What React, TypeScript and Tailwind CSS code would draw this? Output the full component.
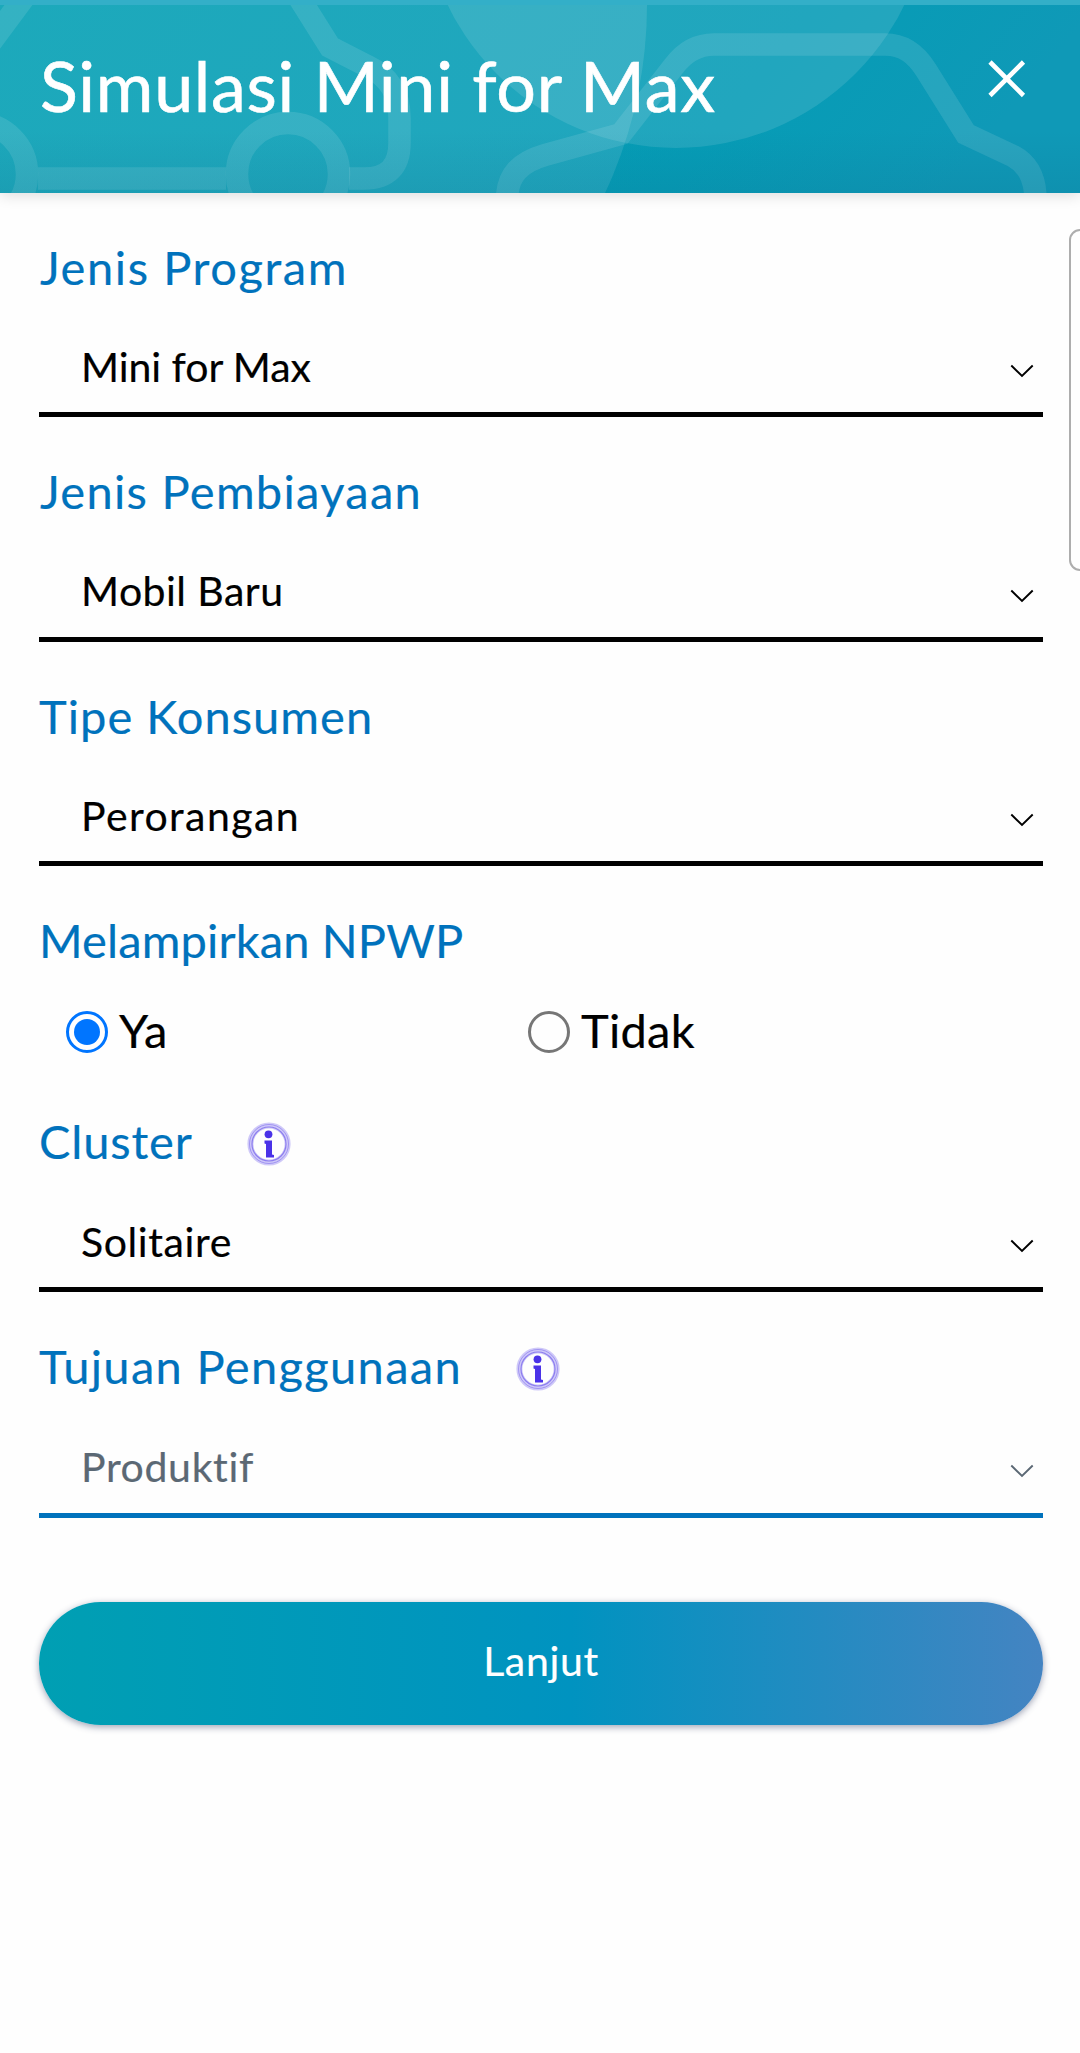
import React, { useState } from "react";

function HeaderArt() {
  return (
    <svg
      className="absolute inset-0 h-full w-full"
      viewBox="0 0 1080 193"
      preserveAspectRatio="none"
      aria-hidden="true"
    >
      <defs>
        <linearGradient id="sea" x1="0" y1="0" x2="1" y2="0.15">
          <stop offset="0" stopColor="#019fb3" />
          <stop offset="0.75" stopColor="#069cb6" />
          <stop offset="1" stopColor="#0f99b7" />
        </linearGradient>
        <linearGradient id="shade" x1="0" y1="0" x2="0" y2="1">
          <stop offset="0.68" stopColor="#0c5f80" stopOpacity="0" />
          <stop offset="1" stopColor="#0c5f80" stopOpacity="0.14" />
        </linearGradient>
      </defs>
      <rect width="1080" height="193" fill="url(#sea)" />
      <g fill="#ffffff" fillOpacity="0.11">
        <circle cx="205" cy="5" r="442" />
        <circle cx="676" cy="-106" r="254" />
      </g>
      <g fill="none" stroke="#ffffff" strokeOpacity="0.11" strokeWidth="22.5">
        <path d="M37 -20L-18 54" />
        <path d="M288 -20L330 47L367 66C390 77 399.5 94 399.5 118V143Q399.5 178.500 364 178.500H349" />
        <path d="M38 178.500H226" />
        <circle cx="288" cy="174" r="51" />
        <circle cx="-24" cy="174" r="51" />
        <path d="M507 200C507 174 521 162 545 155L621 134L674 66Q690 44.500 714 44.500H885C904 44.500 916 54 926 70L966 134L1013 156Q1035.500 168 1035.500 200" />
      </g>
      <rect width="1080" height="193" fill="url(#shade)" />
      <rect width="1080" height="5" fill="#33afc8" />
    </svg>
  );
}

function InfoIcon() {
  return (
    <svg className="h-11 w-11" viewBox="0 0 44 44" aria-hidden="true">
      <circle cx="22" cy="22" r="18.600" fill="none" stroke="#4a32e8" strokeOpacity="0.26" strokeWidth="6" />
      <circle cx="22" cy="22" r="17" fill="none" stroke="#4a32e8" strokeOpacity="0.5" strokeWidth="1.200" />
      <circle cx="22" cy="22" r="19.500" fill="none" stroke="#4a32e8" strokeOpacity="0.35" strokeWidth="1" />
      <circle cx="21.500" cy="12.300" r="3.900" fill="#4a32e8" />
      <path d="M17.500 18.500H25V32.500L27 33V35.500H19V22L17.500 21.500Z" fill="#4a32e8" />
    </svg>
  );
}

function Label({ text, spacing, info }: { text: string; spacing: string; info?: string }) {
  return (
    <div className="flex h-[60px] items-center text-[47px] leading-[60px] text-[#0072bc]">
      <span className={`pt-px whitespace-nowrap ${spacing}`}>{text}</span>
      {info && (
        <span className={`shrink-0 ${info}`}>
          <InfoIcon />
        </span>
      )}
    </div>
  );
}

type FieldProps = {
  label: string;
  labelSpacing: string;
  value: string;
  valueSpacing: string;
  box: string;
  tone?: string;
  info?: string;
};

function SelectField({ label, labelSpacing, value, valueSpacing, box, tone = "border-black text-black", info }: FieldProps) {
  return (
    <div>
      <Label text={label} spacing={labelSpacing} info={info} />
      <div className={`flex items-center justify-between border-b-5 pr-[9px] pl-[42px] ${box} ${tone}`}>
        <span className={`text-[41px] leading-[52px] whitespace-nowrap ${valueSpacing}`}>{value}</span>
        <svg className="mt-[34px] h-3.5 w-6" viewBox="0 0 24 14" fill="none" stroke="currentColor" strokeWidth="1.900">
          <path d="M1.300 1.500L12 12L22.700 1.500" />
        </svg>
      </div>
    </div>
  );
}

function Radio({ text, checked, onSelect, spacing }: { text: string; checked: boolean; onSelect: () => void; spacing: string }) {
  return (
    <button
      type="button"
      role="radio"
      aria-checked={checked}
      onClick={onSelect}
      className="flex h-[42px] w-[462px] items-center text-left text-black"
    >
      <span
        className={`flex size-[42px] shrink-0 items-center justify-center rounded-full border-[3px] ${
          checked ? "border-[#0075ff]" : "border-[#767676]"
        }`}
      >
        {checked && <span className="size-[26px] rounded-full bg-[#0075ff]" />}
      </span>
      <span className={`pb-[5px] pl-[11px] text-[47px] leading-[60px] ${spacing}`}>{text}</span>
    </button>
  );
}

export default function App() {
  const [npwp, setNpwp] = useState(true);
  return (
    <div className="relative h-[2053px] w-[1080px] overflow-hidden bg-[#fefefe] font-['Lato',sans-serif] [-webkit-text-stroke:0.2px_currentColor]">
      <header className="relative flex h-[193px] items-start justify-between pr-[53px] pl-10 text-white shadow-[0_2px_14px_rgba(0,0,0,0.14)]">
        <HeaderArt />
        <h1 className="relative mt-[45px] text-[70px] leading-[80px] tracking-[0.7px] whitespace-nowrap [-webkit-text-stroke:0.6px_currentColor]">
          Simulasi Mini for Max
        </h1>
        <button type="button" aria-label="Tutup" className="relative mt-[59px]">
          <svg className="size-10" viewBox="0 0 40 40" stroke="currentColor" strokeWidth="4.600">
            <path d="M3 3L36.500 36.500M36.500 3L3 36.500" />
          </svg>
        </button>
      </header>

      <main className="flex flex-col gap-[43px] pt-[43px] pr-[37px] pl-[39px]">
        <SelectField
          label="Jenis Program"
          labelSpacing="pl-px tracking-[1.59px]"
          value="Mini for Max"
          valueSpacing="tracking-[-0.05px] pt-[25px]"
          box="h-[121px]"
        />
        <SelectField
          label="Jenis Pembiayaan"
          labelSpacing="pl-px tracking-[1.3px]"
          value="Mobil Baru"
          valueSpacing="tracking-[0.45px] pt-[25px]"
          box="h-[122px]"
        />
        <SelectField
          label="Tipe Konsumen"
          labelSpacing="tracking-[1.05px]"
          value="Perorangan"
          valueSpacing="tracking-[1.4px] pt-[25px]"
          box="h-[121px]"
        />
        <div>
          <Label text="Melampirkan NPWP" spacing="tracking-[0.14px]" />
          <div role="radiogroup" className="flex h-[98px] pt-[42px] pl-[27px]">
            <Radio text="Ya" checked={npwp} onSelect={() => setNpwp(true)} spacing="tracking-[1px]" />
            <Radio text="Tidak" checked={!npwp} onSelect={() => setNpwp(false)} spacing="tracking-[0.3px]" />
          </div>
        </div>
        <SelectField
          label="Cluster"
          labelSpacing="tracking-[0.85px]"
          info="ml-[54px] pt-[7px]"
          value="Solitaire"
          valueSpacing="tracking-[0.6px] pt-[26px]"
          box="h-[122px]"
        />
        <SelectField
          label="Tujuan Penggunaan"
          labelSpacing="tracking-[1.34px]"
          info="ml-[54px] pt-[7px]"
          value="Produktif"
          valueSpacing="tracking-[0.65px] pt-[26px]"
          box="h-[123px]"
          tone="border-[#0072bc] text-[#5b6874]"
        />
        <button
          type="button"
          className="mt-[41px] h-[123px] rounded-full bg-linear-to-r/srgb from-[#009fb3] via-[#0093c0] via-53% to-[#4484c2] pb-[5px] text-[41px] leading-[52px] tracking-[0.66px] text-white shadow-[0_2px_7px_rgba(40,50,90,0.45)]"
        >
          Lanjut
        </button>
      </main>

      {/* Drawer handle that sits partly outside the right edge */}
      <div className="absolute top-[229px] -right-4 h-[342px] w-[27px] rounded-[11px] border-2 border-[#adadad]" />
    </div>
  );
}
